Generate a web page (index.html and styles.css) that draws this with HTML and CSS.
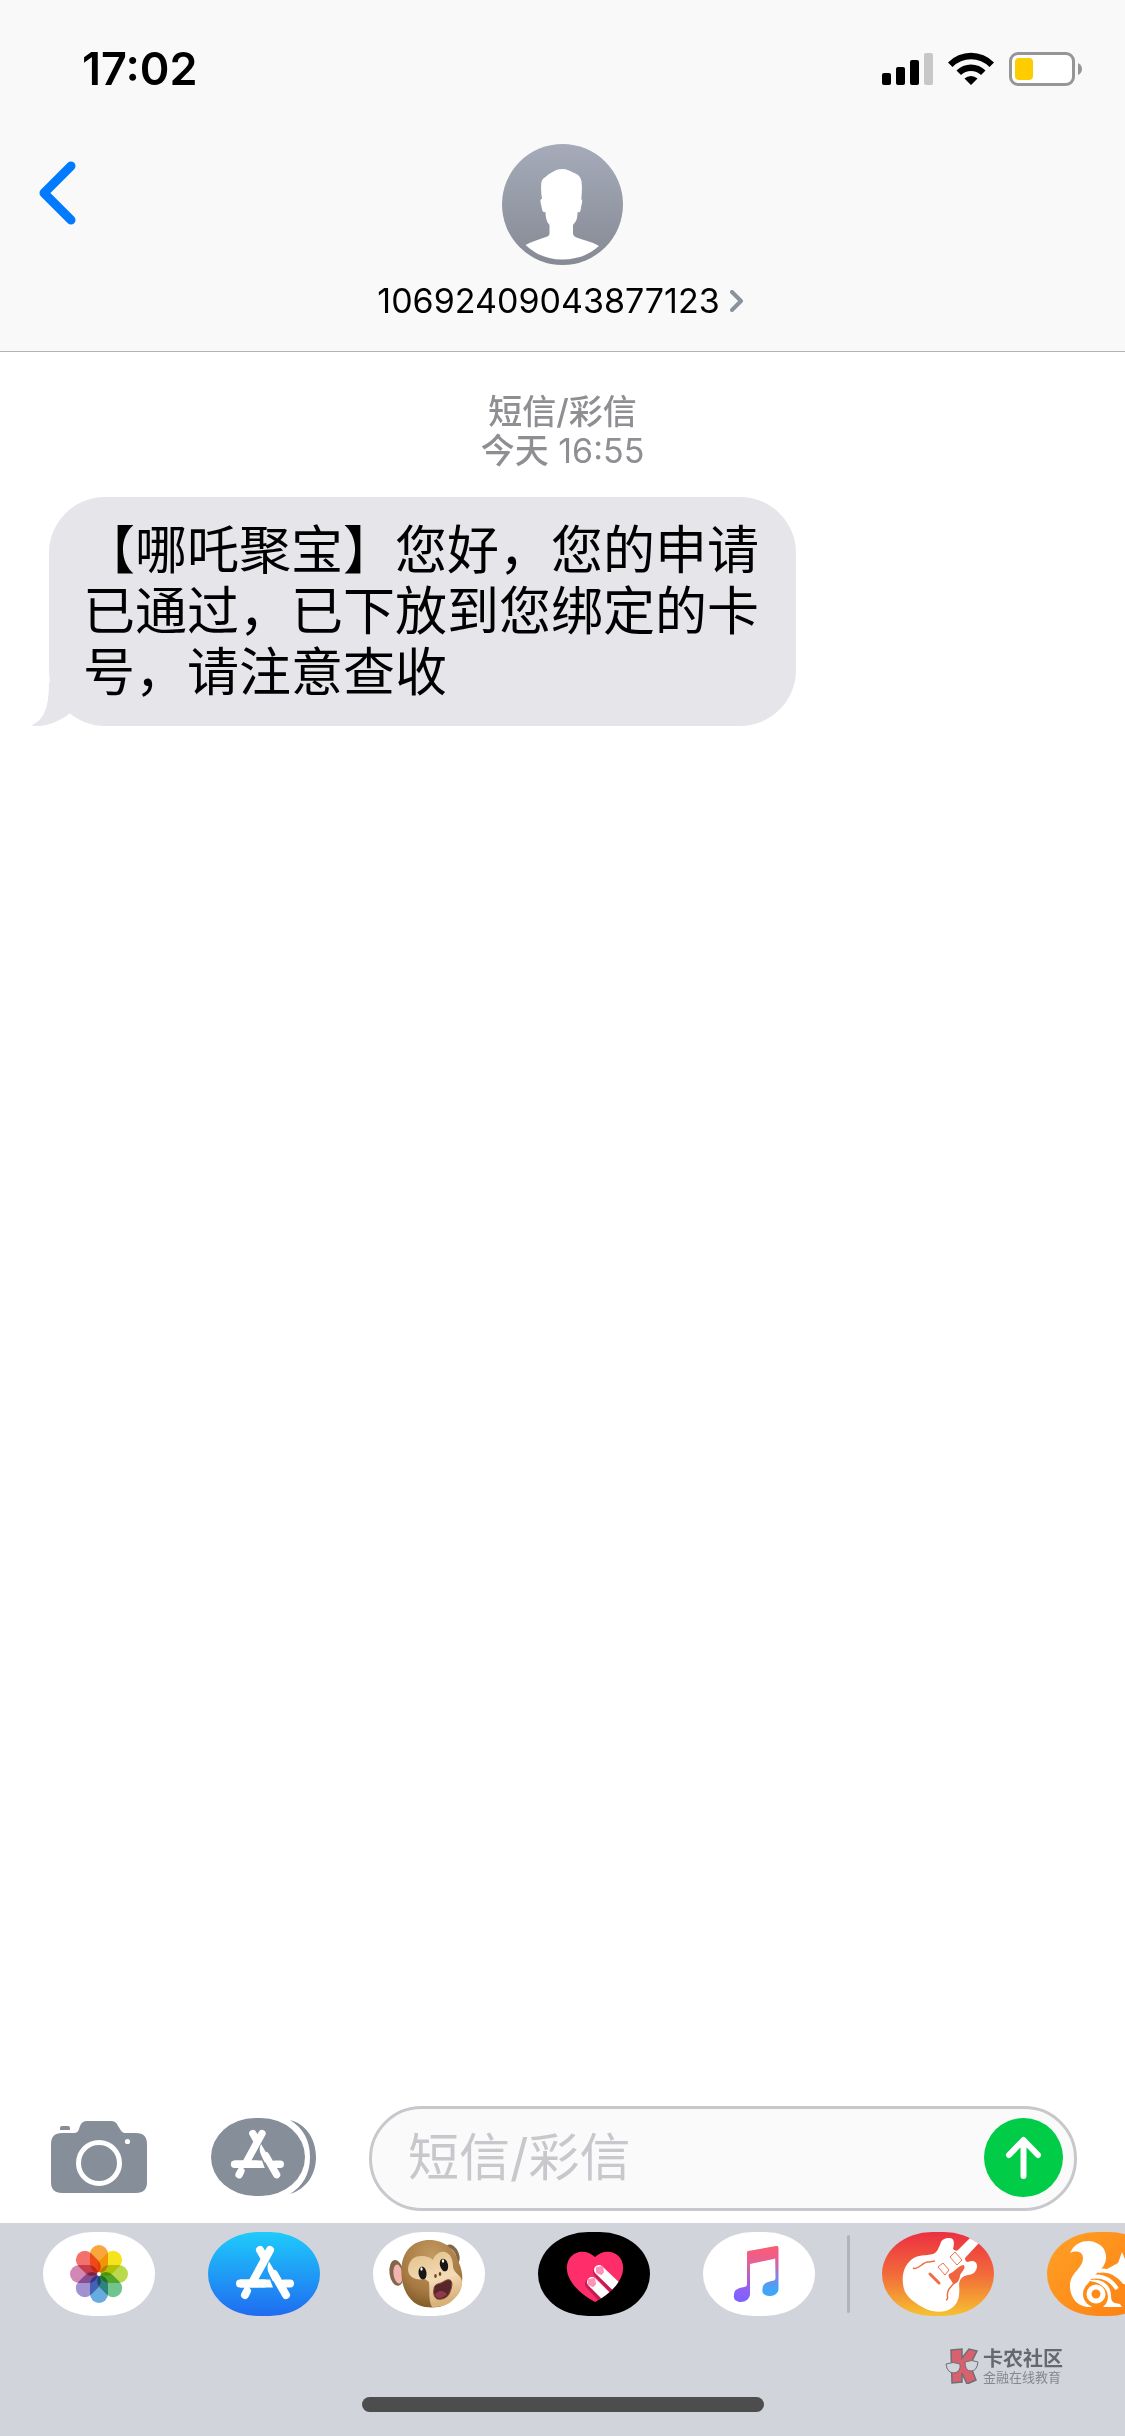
FILE: index.html
```html
<!DOCTYPE html>
<html lang="zh-CN">
<head>
<meta charset="utf-8">
<meta name="viewport" content="width=device-width, initial-scale=1">
<title>短信</title>
<link rel="stylesheet" href="styles.css">
</head>
<body>
<svg class="defs" aria-hidden="true">
  <defs>
    <symbol id="store-a" viewBox="0 0 112 84">
      <g fill="none" stroke="#fff" stroke-width="8" stroke-linecap="round">
        <path d="M62 18 45 49M52 18l4 7M37 63l2-4M66 42l12 21M32 51.500H56M76 51.500h6"/>
      </g>
      <path fill="#fff" d="M32 47.500H62l3 8H32zM61 29.500l10 17-6 3-4-8q-3-6 0-12z"/>
    </symbol>
  </defs>
</svg>

<header class="header">
  <div class="status">
    <time class="clock">17:02</time>
    <svg class="indicators" viewBox="0 0 201 34" aria-hidden="true">
      <rect x="0" y="21" width="9" height="12" rx="2"/>
      <rect x="14" y="15" width="9" height="18" rx="2"/>
      <rect x="28" y="8" width="9" height="25" rx="2"/>
      <rect x="42" y="1" width="9" height="32" rx="2" fill="#c7c7c7"/>
      <path d="M66 10.500a32 32 0 0 1 46 0l-4.500 4.500a26 26 0 0 0-37 0zM74.500 18.500a20.500 20.500 0 0 1 29 0l-4.500 4.500a14.500 14.500 0 0 0-20 0zM82.500 26.500a9.500 9.500 0 0 1 13 0l-6.500 6.500z"/>
      <rect x="128.500" y="1.500" width="63" height="31" rx="7.500" fill="#fff" stroke="#969696" stroke-width="3"/>
      <rect x="133" y="6" width="18" height="22" rx="4" fill="#ffcc00"/>
      <path d="M196 11q4 2 4 6t-4 6z" fill="#969696"/>
    </svg>
  </div>
  <nav class="nav">
    <button class="back" type="button" aria-label="返回">
      <svg viewBox="0 0 38 64" aria-hidden="true"><path d="M33 5 6 32l27 27" fill="none" stroke="#007aff" stroke-width="9" stroke-linecap="round" stroke-linejoin="round"/></svg>
    </button>
    <button class="contact" type="button">
      <svg class="avatar" viewBox="0 0 121 121" aria-hidden="true">
        <defs><linearGradient id="av" x2="0" y2="1"><stop stop-color="#a5abb9"/><stop offset="1" stop-color="#858a94"/></linearGradient></defs>
        <circle cx="60.500" cy="60.500" r="60.500" fill="url(#av)"/>
        <path fill="#fff" d="M60 25c5 0 8 2 11 3.500 4 1 8 4 8.500 9 .8 6 .3 12-.2 18 1 0 1 1 .7 3l-1.500 8c-.5 2-2 2-3 1.500 0 3-.5 7-1.500 9L71 81v8c0 3 2 4 5 5 8 3 15 4 21 8-10 9-22 13.500-37 13.500S33 110 23.500 101c6-3.500 12-5 19-7.500 4-1 5-2 5-5V81c-3-3-4-8-4-13-2 .5-3-.5-3.300-2l-1.700-8c-.2-2 0-3 1.500-3-.7-5-1.200-10-.8-15 .3-5 3-6 6-8.500 4-3 9-6.500 14.800-6.500z"/>
      </svg>
      <span class="number">10692409043877123
        <svg class="more" viewBox="0 0 18 22" aria-hidden="true"><path d="M2 2l9 9-9 9" fill="none" stroke="#8a929e" stroke-width="4" stroke-linecap="round" stroke-linejoin="round"/></svg>
      </span>
    </button>
  </nav>
</header>

<main class="thread">
  <p class="stamp"><strong>短信/彩信</strong><br><strong>今天</strong> 16:55</p>
  <div class="bubble">
    <svg class="tail" viewBox="0 0 50 44" aria-hidden="true"><path fill="#e5e5ea" d="M18 0c0 26-5 38-18 43.500 15 2 28-4 38-11.500L50 0z"/></svg>
    <p>【哪吒聚宝】您好，您的申请已通过，已下放到您绑定的卡号，请注意查收</p>
  </div>
</main>

<footer>
  <form class="composer">
    <button class="camera" type="button" aria-label="相机">
      <svg viewBox="0 0 96 72" aria-hidden="true">
        <g fill="#868e99"><path d="M11 12h12q4 0 5-4l1-3q2-5 7-5h24q5 0 7 5l2 3q2 4 5 4H85q11 0 11 11v38q0 11-11 11H11Q0 72 0 61V23q0-11 11-11z"/><path d="M9 9V7q0-2 2-2h6q2 0 2 2v2z"/></g>
        <circle cx="48" cy="42" r="20.500" fill="none" stroke="#fff" stroke-width="5"/>
        <circle cx="76.500" cy="20.500" r="2.600" fill="#fff"/>
      </svg>
    </button>
    <button class="apps" type="button" aria-label="应用">
      <svg viewBox="0 0 106 78" aria-hidden="true">
        <g fill="#868e99"><rect width="94" height="78" rx="44" ry="39"/><path d="M79 2c16 4 26 19 26 37S95 71 79 76c13-8 20-20 20-37S92 10 79 2z"/></g>
        <use href="#store-a" x="-6" y="-1" width="103" height="77"/>
      </svg>
    </button>
    <div class="field">
      <input type="text" placeholder="短信/彩信" aria-label="短信/彩信">
      <button class="send" type="submit" aria-label="发送">
        <svg viewBox="0 0 79 79" aria-hidden="true"><path d="M39.500 58V23M25 37l14.500-15L54 37" fill="none" stroke="#fff" stroke-width="6" stroke-linecap="round" stroke-linejoin="round"/></svg>
      </button>
    </div>
  </form>

  <section class="tray">
    <div class="strip">
      <button class="app" type="button" aria-label="照片">
        <svg viewBox="0 0 112 84" aria-hidden="true">
          <g class="petals" transform="translate(56 42)">
            <rect x="-9" y="-29" width="18" height="28" rx="9" fill="#f9a63c"/>
            <rect x="-9" y="-29" width="18" height="28" rx="9" fill="#f7e31c" transform="rotate(45)"/>
            <rect x="-9" y="-29" width="18" height="28" rx="9" fill="#bbd94c" transform="rotate(90)"/>
            <rect x="-9" y="-29" width="18" height="28" rx="9" fill="#70c48e" transform="rotate(135)"/>
            <rect x="-9" y="-29" width="18" height="28" rx="9" fill="#68abdf" transform="rotate(180)"/>
            <rect x="-9" y="-29" width="18" height="28" rx="9" fill="#a292cf" transform="rotate(225)"/>
            <rect x="-9" y="-29" width="18" height="28" rx="9" fill="#d387b5" transform="rotate(270)"/>
            <rect x="-9" y="-29" width="18" height="28" rx="9" fill="#f2716a" transform="rotate(315)"/>
          </g>
          <circle cx="56" cy="42" r="2" fill="#fff"/>
        </svg>
      </button>
      <button class="app app-store" type="button" aria-label="App Store">
        <svg viewBox="0 0 112 84" aria-hidden="true"><use href="#store-a" width="112" height="84"/></svg>
      </button>
      <button class="app" type="button" aria-label="动话表情">
        <svg viewBox="0 0 112 84" aria-hidden="true">
          <defs>
            <radialGradient id="fur" cx=".5" cy=".25" r=".85"><stop stop-color="#c39a62"/><stop offset=".6" stop-color="#a67a42"/><stop offset="1" stop-color="#74501f"/></radialGradient>
            <linearGradient id="skin" x2=".3" y2="1"><stop stop-color="#e3bf88"/><stop offset=".6" stop-color="#f3dcb6"/><stop offset="1" stop-color="#d9b27a"/></linearGradient>
          </defs>
          <ellipse cx="23.500" cy="41" rx="7" ry="13" fill="#81664a" transform="rotate(-8 23 41)"/>
          <ellipse cx="25" cy="42" rx="4.500" ry="9.500" fill="#f3b3b0" transform="rotate(-8 25 42)"/>
          <ellipse cx="79" cy="23" rx="7" ry="11" fill="#81664a" transform="rotate(-22 79 23)"/>
          <ellipse cx="79" cy="24" rx="4" ry="8" fill="#f3b3b0" transform="rotate(-22 79 24)"/>
          <path fill="url(#fur)" d="M54 8c17-1 28 9 32 23 5 11 4 23-1 30-7 12-19 16-33 14-13-2-21-14-23-27-3-20 4-38 25-40z"/>
          <path fill="url(#skin)" d="M35 37c1-9 6-13 13-13 6 0 10 2 12 4 2-6 7-9 12-8 6 2 8 8 8 15 1 7 9 8 9 15 0 9-4 13-8 17-6 7-14 8-22 8-4-7-2-17-3-25l-4-3c-9 2-17-2-17-10z"/>
          <ellipse cx="49.500" cy="41" rx="4" ry="6.500" fill="#191715" transform="rotate(-8 50 41)"/>
          <ellipse cx="71" cy="33" rx="4" ry="6.500" fill="#191715" transform="rotate(-15 71 33)"/>
          <ellipse cx="48.500" cy="37" rx="1.200" ry="1.800" fill="#fff"/><ellipse cx="70" cy="29" rx="1.200" ry="1.800" fill="#fff"/>
          <ellipse cx="62.500" cy="44" rx="1.300" ry="2" fill="#77431e"/><ellipse cx="67" cy="42" rx="1.300" ry="2" fill="#77431e"/>
          <path d="M61 57c0-4 3-5 7-6 4-2 6-4 9-3 3 2 2 7 0 12-2 6-8 8-13 7-3-2-4-6-3-10z" fill="#57252a" stroke="#7e4e31"/>
          <path d="M62 62c5-5 9-3 12 0-3 4-8 5-11 3z" fill="#8e3b49"/>
        </svg>
      </button>
      <button class="app app-touch" type="button" aria-label="Digital Touch">
        <svg viewBox="0 0 112 84" aria-hidden="true">
          <defs><clipPath id="heart"><path d="M57 25c5-5 11-6 16-5 8 2 13 9 12 18-1 13-15 25-28 32C44 63 30 51 29 38c-1-9 4-16 12-18 5-1 11 0 16 5z"/></clipPath></defs>
          <g clip-path="url(#heart)">
            <path fill="#ff2d69" d="M20 15h72v60H20z"/>
            <g stroke-width="10" stroke-linecap="round" fill="none"><path stroke="#c51b55" d="M60 40 84 66M52 52l20 22"/><path stroke="#fff" d="m61 38 26 25M54 50l24 24"/></g>
            <path d="m59 36 5-1 1 5-2 2-4-2zM51 48l5-1 1 5-2 2-4-2z" fill="#ff93b8" stroke="#ff93b8" stroke-width="2" stroke-linejoin="round"/>
          </g>
        </svg>
      </button>
      <button class="app" type="button" aria-label="音乐">
        <svg viewBox="0 0 112 84" aria-hidden="true">
          <defs>
            <linearGradient id="ml" gradientUnits="userSpaceOnUse" x1="45" y1="14" x2="40" y2="68"><stop stop-color="#fb5c72"/><stop offset=".35" stop-color="#e0609f"/><stop offset=".75" stop-color="#9560f0"/><stop offset="1" stop-color="#7c62ff"/></linearGradient>
            <linearGradient id="mr" gradientUnits="userSpaceOnUse" x1="72" y1="14" x2="70" y2="64"><stop stop-color="#fb5c72"/><stop offset=".3" stop-color="#e0609f"/><stop offset=".6" stop-color="#8683e0"/><stop offset=".85" stop-color="#42a5f7"/></linearGradient>
          </defs>
          <path fill="url(#ml)" d="M45 19l28-5q2 0 2 2v10l-28 6v30c0 5-5 8-9 8-5 0-8-3-7-7 0-6 5-7 10-8 2 0 3-1 3-3V21q0-2 1-2z"/>
          <path fill="url(#mr)" d="M72 15l2-1q1.500 0 1.500 2v41c0 4-4 7-8 7-5 0-9-2-8-7 0-5 4-7 9-8q4 0 4-3z"/>
        </svg>
      </button>
      <span class="divider"></span>
      <button class="app app-band" type="button" aria-label="库乐队">
        <svg viewBox="0 0 112 84" aria-hidden="true">
          <path fill="#fff" d="M89 5 92 2 100 8 97 11 83 26Q83 30 86 30C90 28 95 29 95 34C95 39 91 43 86 43C81 44 78 46 77 52C78 62 77 70 71 75C64 81 53 81 44 77C34 72 24 65 22 57C19 46 21 35 29 28C36 22 44 24 51 22C56 20 56 16 58 13C59 8 62 6 67 6C72 6 73 10 71 17Q74 20 76 18z"/>
          <g fill="none" stroke="#f07045"><path d="m73 20 7 8-5 5-7-8zM61 31l6 7-4 5-7-8z"/><path stroke-width="1.500" d="M31 36c6 3 9-7 16-6l6-1M64 68c4-1-1-5 3-11l6-7"/></g>
          <path d="m48 42 9 9" stroke="#ee6f45" stroke-width="3" stroke-linecap="round"/>
          <path fill="#ef6541" d="M67 42c6-2 8-8 15-9 2 5-3 6-4 11-1 6-4 8-7 8-1-4-6-7-4-10z"/>
        </svg>
      </button>
      <button class="app app-uc" type="button" aria-label="UC浏览器">
        <svg viewBox="0 0 112 84" aria-hidden="true">
          <path fill="#fff" d="M23 21c4-9 11-12 19-12 11 1 18 8 17 18-1 8-7 12-13 18-9 9-10 22-1 30-13 1-22-8-22-21 0-14 13-17 13-28 0-6-6-8-13-5z"/>
          <circle cx="49" cy="62" r="13" fill="#fd8c16"/>
          <circle cx="49" cy="62" r="7" fill="none" stroke="#fff" stroke-width="5"/>
          <path fill="#fff" d="M40 49c12-4 24 2 24 15q0 6 4 7l5 1 2 3H56c5-4 6-10 4-15-3-7-11-11-20-11z"/>
          <g fill="none" stroke="#fff" stroke-width="4"><path d="M44 45c13-2 21 4 26 12M51 39c11-2 20 3 27 12"/></g>
          <path fill="#fff" d="m60 37 11-6 4-11 6 14 12 12-4 12-12-6c-4-7-9-13-17-15z"/>
        </svg>
      </button>
    </div>
    <div class="watermark">
      <svg class="mark" viewBox="0 0 35 36" aria-hidden="true">
        <path d="M6 2 17 1v9l7-9 8 2-7 14 6 15-9 4-5-11v9l-10 1z" fill="#d9616d" stroke="#6d6f75" stroke-width="1.500"/>
        <g fill="#d1d4db" stroke="#6d6f75"><path d="M1 16q7-3 14 0 1 8-6 9-7 0-8-9zM20 14q7-3 13 0-1 9-7 9-6 0-6-9z"/></g>
      </svg>
      <div><p class="brand">卡农社区</p><p class="slogan">金融在线教育</p></div>
    </div>
    <div class="home"></div>
  </section>
</footer>
</body>
</html>
```
FILE: styles.css
```css
* { box-sizing: border-box; }

body {
  margin: 0;
  min-height: 100vh;
  display: flex;
  flex-direction: column;
  background: #fff;
  color: #000;
  font-family: Inter, "Noto Sans CJK SC", sans-serif;
  overflow-x: hidden;
}

p { margin: 0; }
svg { display: block; }

button {
  padding: 0;
  border: 0;
  background: none;
  color: inherit;
  font: inherit;
}

.defs { position: absolute; width: 0; height: 0; }

/* Header */
.header {
  background: #f9f9f9;
  border-bottom: 1px solid #b2b2b2;
}

.status {
  display: flex;
  justify-content: space-between;
  align-items: center;
  padding: 44px 42px 0 82px;
}

.clock {
  font-size: 45px;
  font-weight: 600;
  line-height: 50px;
}

.indicators { width: 201px; }

.nav {
  display: grid;
  grid-template-columns: 1fr auto 1fr;
  align-items: start;
  padding: 50px 38px 30px;
}

.back { justify-self: start; margin-top: 17px; }
.back svg { width: 38px; }

.contact {
  display: flex;
  flex-direction: column;
  align-items: center;
  gap: 16px;
}

.avatar { width: 121px; }

.number {
  display: flex;
  align-items: center;
  gap: 10px;
  font-size: 34px;
  line-height: 40px;
}

.more { width: 18px; }

/* Conversation */
.thread {
  flex: 1;
  padding: 40px 49px;
}

.stamp {
  color: #8e8e93;
  font-size: 34px;
  line-height: 39px;
  text-align: center;
}

.stamp strong { font-weight: 500; }

.bubble {
  position: relative;
  width: fit-content;
  max-width: 747px;
  margin-top: 27px;
  padding: 23px 36px 23px 34px;
  border-radius: 56px;
  background: #e5e5ea;
  font-size: 52px;
  line-height: 61px;
  text-spacing-trim: space-all;
}

.tail {
  position: absolute;
  left: -18px;
  bottom: 0;
  width: 50px;
}

/* Composer */
.composer {
  display: flex;
  align-items: center;
  padding: 0 48px 12px 51px;
}

.camera, .apps { margin-bottom: 4px; }
.camera { width: 96px; margin-right: 64px; }
.apps { width: 106px; margin-right: 52px; }

.field {
  flex: 1;
  min-width: 0;
  display: flex;
  align-items: center;
  padding: 9px 11px 11px 36px;
  border: 3px solid #c7c7cc;
  border-radius: 53px;
  background: #fafafa;
}

.field input {
  flex: 1;
  min-width: 0;
  padding: 0;
  border: 0;
  outline: 0;
  background: none;
  color: #000;
  font: inherit;
  font-size: 51px;
  line-height: 60px;
}

.field input::placeholder { color: #c7c7cc; opacity: 1; }

.send {
  width: 79px;
  border-radius: 50%;
  background: #00cc47;
}

/* App tray */
.tray {
  padding: 9px 0 24px;
  background: #d1d4db;
}

.strip {
  display: flex;
  align-items: center;
  gap: 53px;
  padding-left: 43px;
  overflow: hidden;
}

.app {
  flex: none;
  width: 112px;
  border-radius: 50px / 42px;
  background: #fff;
  overflow: hidden;
}

.app-store { background: linear-gradient(#1fcbfb, #1f6cf0); }
.app-touch { background: #000; }
.app-band { background: linear-gradient(#ec2f42, #f26a3a 50%, #f6c230); }
.app-uc { background: linear-gradient(135deg, #ffa025, #fc7d12); }

.petals { isolation: isolate; }
.petals rect { mix-blend-mode: multiply; }

.divider {
  flex: none;
  width: 3px;
  height: 78px;
  margin: 0 -21px;
  border-radius: 2px;
  background: #b0b3b9;
}

.watermark {
  display: flex;
  justify-content: flex-end;
  align-items: center;
  gap: 3px;
  margin-top: 32px;
  padding-right: 62px;
  color: #66686e;
}

.mark { width: 35px; }

.brand { font-size: 20px; font-weight: 700; line-height: 22px; }
.slogan { color: #85878d; font-size: 13px; line-height: 14px; }

.home {
  width: 402px;
  height: 15px;
  margin: 13px auto 0;
  border-radius: 8px;
  background: #4d4d4d;
}
```
